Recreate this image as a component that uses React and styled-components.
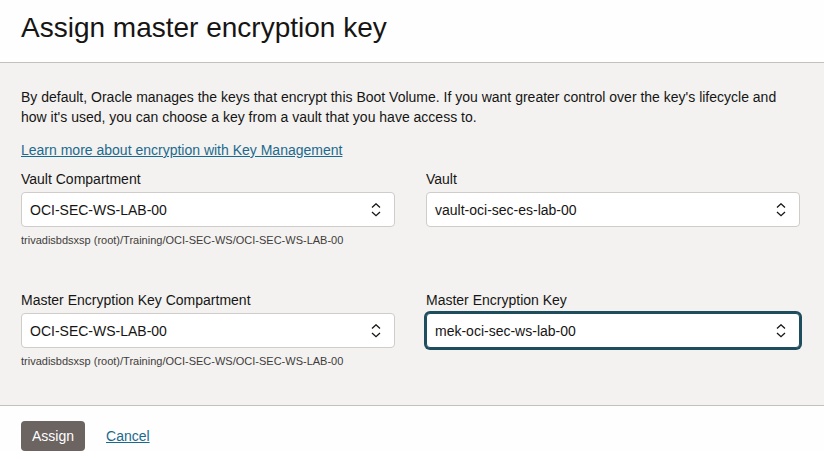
import React from "react";
import styled, { createGlobalStyle } from "styled-components";

const GlobalStyle = createGlobalStyle`
  body {
    margin: 0;
    background: #ffffff;
    font-family: "Liberation Sans", Arial, sans-serif;
    color: #161513;
  }
`;

const fields = [
  {
    label: "Vault Compartment",
    value: "OCI-SEC-WS-LAB-00",
    hint: "trivadisbdsxsp (root)/Training/OCI-SEC-WS/OCI-SEC-WS-LAB-00",
  },
  { label: "Vault", value: "vault-oci-sec-es-lab-00" },
  {
    label: "Master Encryption Key Compartment",
    value: "OCI-SEC-WS-LAB-00",
    hint: "trivadisbdsxsp (root)/Training/OCI-SEC-WS/OCI-SEC-WS-LAB-00",
  },
  { label: "Master Encryption Key", value: "mek-oci-sec-ws-lab-00", focused: true },
];

const Chevrons = () => (
  <svg width="10" height="14" viewBox="0 0 10 14" fill="none">
    <path d="M1 4.5 L5 0.8 L9 4.5" stroke="#161513" strokeWidth="1.3" />
    <path d="M1 9 L5 12.7 L9 9" stroke="#161513" strokeWidth="1.3" />
  </svg>
);

const Field = ({ label, value, hint, focused }) => (
  <FieldBox>
    <Label>{label}</Label>
    <Select $focused={focused}>
      <SelectValue>{value}</SelectValue>
      <Chevrons />
    </Select>
    {hint && <Hint>{hint}</Hint>}
  </FieldBox>
);

export default function App() {
  return (
    <>
      <GlobalStyle />
      <Dialog>
        <Header>
          <Title>Assign master encryption key</Title>
        </Header>
        <Body>
          <Intro>
            By default, Oracle manages the keys that encrypt this Boot Volume. If you want
            greater control over the key's lifecycle and how it's used, you can choose a key
            from a vault that you have access to.
          </Intro>
          <LearnLink href="#">Learn more about encryption with Key Management</LearnLink>
          <FieldGrid>
            {fields.map((f) => (
              <Field key={f.label} {...f} />
            ))}
          </FieldGrid>
        </Body>
        <Footer>
          <PrimaryButton>Assign</PrimaryButton>
          <TextLink href="#">Cancel</TextLink>
        </Footer>
      </Dialog>
    </>
  );
}

const Dialog = styled.div`
  display: flex;
  flex-direction: column;
  width: 824px;
  height: 459px;
  overflow: hidden;
`;

const Header = styled.header`
  height: 63px;
  padding: 12px 21px 0;
  box-sizing: border-box;
  background: #fefefe;
  border-bottom: 1px solid #c4c1bd;
  flex-shrink: 0;
`;

const Title = styled.h1`
  margin: 0;
  font-size: 28px;
  font-weight: 400;
  line-height: 32px;
  color: #161513;
`;

const Body = styled.main`
  display: flex;
  flex-direction: column;
  align-items: flex-start;
  background: #f3f2f1;
  padding: 24px 24px 0 21px;
  height: 343px;
  flex-shrink: 0;
  box-sizing: border-box;
  border-bottom: 1px solid #c4c1bd;
`;

const Intro = styled.p`
  margin: 0;
  font-size: 14px;
  line-height: 20px;
  color: #161513;
`;

const LearnLink = styled.a`
  margin-top: 13px;
  font-size: 14px;
  line-height: 20px;
  color: #1b6a8d;
  text-decoration: underline;
`;

const FieldGrid = styled.div`
  display: grid;
  grid-template-columns: 1fr 1fr;
  column-gap: 31px;
  row-gap: 42px;
  width: 100%;
  margin-top: 9px;
`;

const FieldBox = styled.div`
  display: flex;
  flex-direction: column;
`;

const Label = styled.label`
  font-size: 14px;
  line-height: 20px;
  margin-bottom: 3px;
  color: #161513;
`;

const Select = styled.div`
  display: flex;
  align-items: center;
  justify-content: space-between;
  height: 35px;
  box-sizing: border-box;
  padding: 0 13px 0 8px;
  background: #ffffff;
  border: 1px solid ${(p) => (p.$focused ? "#1e4d5e" : "#cfccc9")};
  border-radius: 4px;
  box-shadow: ${(p) => (p.$focused ? "0 0 0 2px #1e4d5e" : "none")};
`;

const SelectValue = styled.span`
  font-size: 14px;
  color: #161513;
`;

const Hint = styled.div`
  margin-top: 5px;
  font-size: 11px;
  line-height: 16px;
  color: #3f3c39;
`;

const Footer = styled.footer`
  display: flex;
  align-items: center;
  gap: 21px;
  padding: 15px 21px 0;
  background: #fefefe;
`;

const PrimaryButton = styled.button`
  height: 30px;
  padding: 0 11px;
  border: none;
  border-radius: 4px;
  background: #6b6461;
  color: #ffffff;
  font-family: "Liberation Sans", Arial, sans-serif;
  font-size: 14px;
`;

const TextLink = styled.a`
  font-size: 14px;
  color: #1b6a8d;
  text-decoration: underline;
`;
